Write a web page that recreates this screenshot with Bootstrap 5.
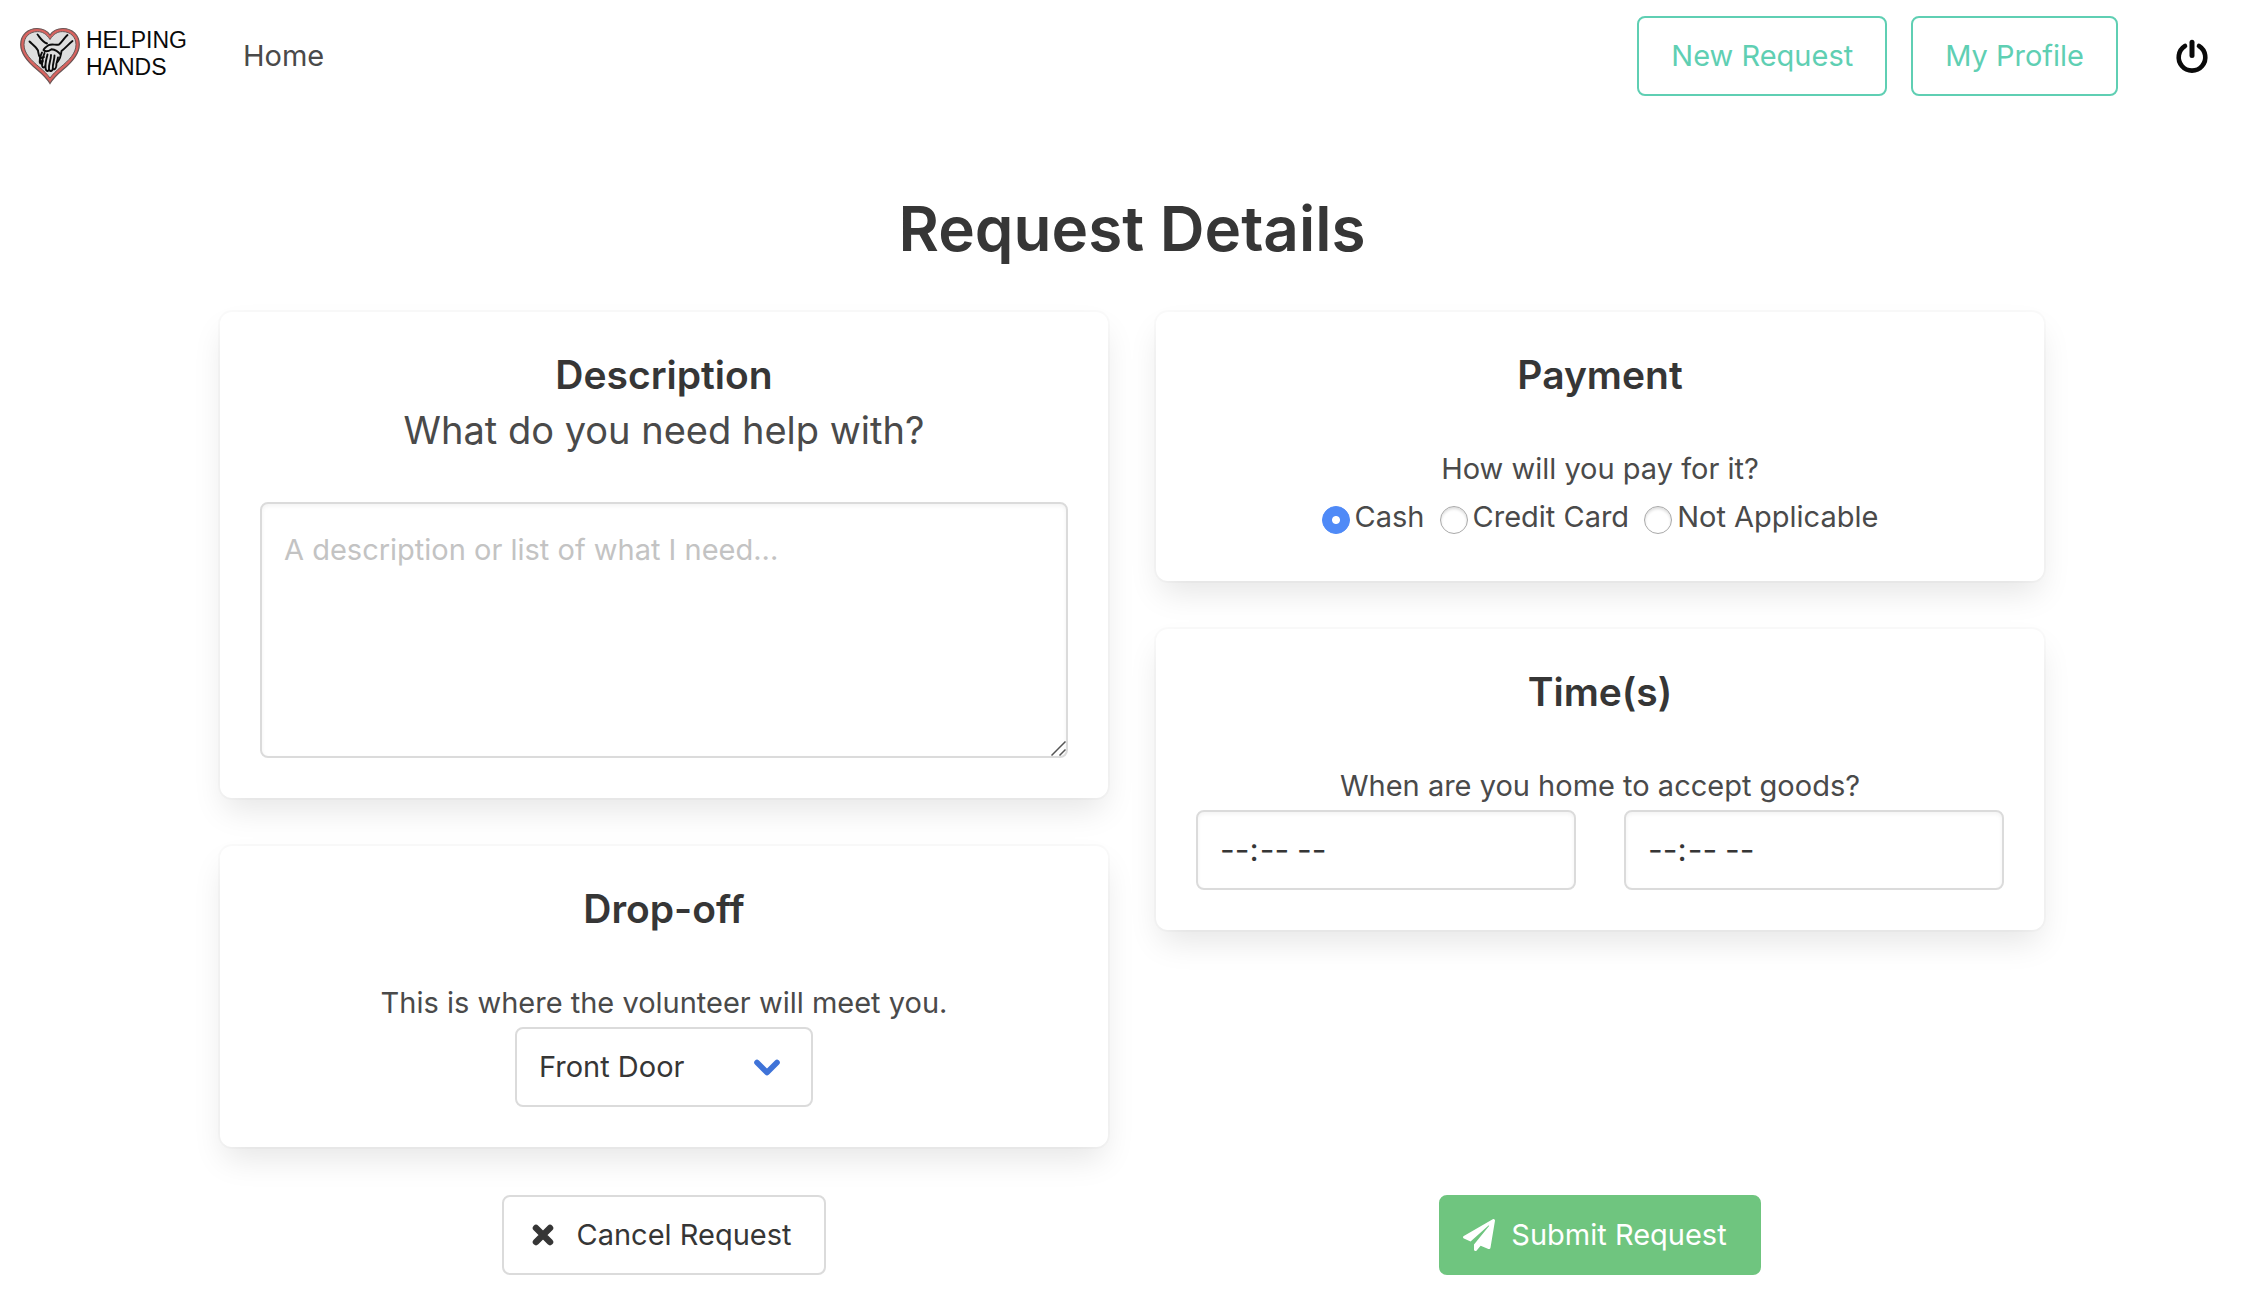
<!DOCTYPE html>
<html lang="en">
<head>
<meta charset="utf-8">
<meta name="viewport" content="width=device-width, initial-scale=1">
<title>Helping Hands - Request Details</title>
<link href="https://cdn.jsdelivr.net/npm/bootstrap@5.3.0/dist/css/bootstrap.min.css" rel="stylesheet">
<style>
  body { font-family: Inter, "Liberation Sans", sans-serif; font-size: 29px; line-height: 48px; color: #4a4a4a; background: #fff; }
  .site-nav { padding: 16px 50px 16px 20px; --bs-navbar-nav-link-padding-x: 0; }
  .brand-link { gap: 6px; }
  .brand-words { font-family: "Liberation Sans", sans-serif; font-size: 23px; line-height: 27px; color: #0a0a0a; padding-top: 1px; }
  .home-link { color: #4a4a4a; margin-left: 56px; }
  .nav-actions { gap: 24px; }
  .power-link { color: #0a0a0a; margin-left: 32px; }
  .btn { --bs-btn-font-size: 29px; --bs-btn-line-height: 48px; --bs-btn-border-width: 2px; --bs-btn-border-radius: 8px; --bs-btn-padding-y: 14px; --bs-btn-padding-x: 32px; }
  .btn-teal { --bs-btn-color: #5fcfb3; --bs-btn-border-color: #5fcfb3; --bs-btn-hover-color: #fff; --bs-btn-hover-bg: #5fcfb3; --bs-btn-hover-border-color: #5fcfb3; }
  .btn-plain { --bs-btn-color: #363636; --bs-btn-bg: #fff; --bs-btn-border-color: #dbdbdb; --bs-btn-hover-border-color: #b5b5b5; }
  .btn-send { --bs-btn-color: #fff; --bs-btn-bg: #6fc57f; --bs-btn-border-color: #6fc57f; --bs-btn-hover-color: #fff; --bs-btn-hover-bg: #62ba73; --bs-btn-hover-border-color: #62ba73; }
  .btn-icon { --bs-btn-padding-x: 22px; padding-right: 32px; gap: 16px; }
  .page-body { max-width: 1876px; padding: 80px 24px 36px 28px; }
  .page-title { font-size: 62px; line-height: 74px; font-weight: 600; color: #363636; margin-bottom: 46px; }
  .row { --bs-gutter-x: 48px; }
  .stack { gap: 48px; }
  .card { --bs-card-border-width: 0; --bs-card-border-radius: 12px; --bs-card-spacer-x: 40px; --bs-card-spacer-y: 40px; --bs-card-color: #4a4a4a; box-shadow: 0 16px 32px -4px rgba(10,10,10,.1), 0 0 0 2px rgba(10,10,10,.02); }
  .box-title { font-size: 39px; line-height: 45px; font-weight: 600; color: #363636; margin-bottom: 48px; }
  .box-title.tight { margin-bottom: 8px; }
  .box-subtitle { font-size: 38px; line-height: 50px; margin-bottom: 47px; }
  .form-control, .form-select { font-size: 29px; line-height: 48px; color: #363636; border: 2px solid #dbdbdb; border-radius: 8px; padding: 14px 22px; }
  .form-control { box-shadow: inset 0 2px 4px rgba(10,10,10,.05); }
  textarea.form-control { padding-top: 22px; height: 256px; }
  .form-control::placeholder { color: #c3c3c3; }
  textarea::-webkit-resizer { background: url("data:image/svg+xml,%3Csvg xmlns='http://www.w3.org/2000/svg' viewBox='0 0 16 16'%3E%3Cpath d='M1 15 15 1M9 15l6-6' stroke='%23555' stroke-width='1.5'/%3E%3C/svg%3E") center / 16px no-repeat; }
  .form-select { width: 298px; background: #fff url("data:image/svg+xml,%3Csvg xmlns='http://www.w3.org/2000/svg' viewBox='0 0 26 17'%3E%3Cpath d='M3 3.500 13 13.500 23 3.500' fill='none' stroke='%233f73d8' stroke-width='5.600' stroke-linecap='round' stroke-linejoin='round'/%3E%3C/svg%3E") right 31px center / 26px 17px no-repeat; }
  .time-row { gap: 48px; }
  input[type=time] { font-size: 32px; height: 80px; padding-top: 0; padding-bottom: 0; }
  input[type=time]::-webkit-calendar-picker-indicator { display: none; }
  .pay-row { gap: 15px; }
  .form-check-input { width: 28px; height: 28px; margin: 6px 5px 0 0; border: 1px solid #aaa; box-shadow: inset 0 2px 3px rgba(0,0,0,.14); flex: none; }
  .form-check-input:checked { background-color: #4f8af7; border-color: #4f8af7; box-shadow: none; }
  .form-check-input:checked[type=radio] { --bs-form-check-bg-image: none; background-image: radial-gradient(circle, #fff 3.5px, transparent 4.5px); }
  .action-row { margin-top: 48px; }
</style>
<script src="https://cdn.jsdelivr.net/npm/bootstrap@5.3.0/dist/js/bootstrap.bundle.min.js"></script>
</head>
<body>
<nav class="navbar navbar-expand site-nav">
  <a class="d-flex text-decoration-none brand-link" href="#" aria-label="Helping Hands">
    <svg width="60" height="60" viewBox="0 0 60 60" fill="none" aria-hidden="true">
      <path d="M30 9C27 4.500 22 2.500 17 2.500C8 2.500.700 9 .700 18.500C.700 29 9 37 17 43.500C23 48.500 27 52.500 30 57.500C33 52.500 37 48.500 43 43.500C51 37 59.300 29 59.300 18.500C59.300 9 52 2.500 43 2.500C38 2.500 33 4.500 30 9Z" fill="#d9635f" stroke="#6a5555" stroke-width="1.200"/>
      <path d="M30 13.500C26.500 8 22.500 5.600 17.500 5.600C9.500 5.600 4 11 4 18.700C4 27.500 11.500 34.500 19 40.800C24 45 27.500 48.500 30 52C32.500 48.500 36 45 41 40.800C48.500 34.500 56 27.500 56 18.700C56 11 50.500 5.600 42.500 5.600C37.500 5.600 33.500 8 30 13.500Z" fill="#dedede" stroke="#6a5555" stroke-width="1"/>
      <g stroke="#0c0c0c" stroke-width="1.900" stroke-linecap="round" stroke-linejoin="round">
        <path d="M17.500 8.500C20 11.500 22 15.500 27 17.500M47.500 9C44 12 42 16 39 18.500C35 19.300 32 17.500 28.500 19.200C26.500 20.500 24 22.500 23.500 24C25.500 26 29 25 31.500 23.200C35 23.500 38 25 40.500 28.500M52.500 15C48.500 18 46 21.500 41.500 25C41 30 40 33 37.500 36M9.500 15.500C12 18 16 20.500 18 24.500C18.500 28 18.500 30 20.500 32"/>
        <path d="M22 26.500C20.500 29 19.500 33 19.700 36C20.200 38.500 22.500 37.500 22.500 36M24.500 27C23 31 21.500 36 22.200 40C23 42.500 25.200 41.500 25.200 39.500M27.500 28.500C26.500 33 24.500 38 25.800 43.500C27 46 29.300 45 29 42.500M31 29C31 34 28.500 38 29 43C30 46.500 32.500 45 32.800 42.500M34.500 29.500C34.500 34 32.500 38 32.800 42.500C34 44.500 36 42.500 36.300 40M38 31.500C37.500 35 36 37 36.300 40M20.500 32L24 31M20 35.500L23 35"/>
      </g>
    </svg>
    <span class="brand-words">HELPING<br>HANDS</span>
  </a>
  <div class="navbar-nav flex-grow-1">
    <a class="nav-link p-0 home-link" href="#">Home</a>
  </div>
  <div class="d-flex align-items-center nav-actions">
    <a class="btn btn-teal" href="#">New Request</a>
    <a class="btn btn-teal" href="#">My Profile</a>
    <a class="power-link d-flex" href="#" aria-label="Log out">
      <svg width="36" height="34" viewBox="0 0 36 34" fill="none" stroke="currentColor" stroke-linecap="round" aria-hidden="true">
        <path d="M11 7A13.300 13.300 0 1 0 25 7" stroke-width="4.600"/><path d="M18 3.200V16.500" stroke-width="5"/>
      </svg>
    </a>
  </div>
</nav>

<main class="container-fluid page-body">
  <h1 class="page-title text-center">Request Details</h1>
  <form>
    <div class="row">
      <div class="col-6 d-flex flex-column stack">
        <section class="card"><div class="card-body text-center">
          <h2 class="box-title tight">Description</h2>
          <label class="box-subtitle d-block" for="what">What do you need help with?</label>
          <textarea class="form-control d-block" id="what" placeholder="A description or list of what I need..."></textarea>
        </div></section>
        <section class="card"><div class="card-body text-center">
          <h2 class="box-title">Drop-off</h2>
          <label class="d-block" for="place">This is where the volunteer will meet you.</label>
          <select class="form-select mx-auto" id="place"><option>Front Door</option><option>Back Door</option></select>
        </div></section>
      </div>
      <div class="col-6 d-flex flex-column stack">
        <section class="card"><div class="card-body text-center">
          <h2 class="box-title">Payment</h2>
          <div id="pay-label">How will you pay for it?</div>
          <div class="d-flex justify-content-center pay-row" role="radiogroup" aria-labelledby="pay-label">
            <label class="d-flex align-items-center"><input class="form-check-input" type="radio" name="pay" checked>Cash</label>
            <label class="d-flex align-items-center"><input class="form-check-input" type="radio" name="pay">Credit Card</label>
            <label class="d-flex align-items-center"><input class="form-check-input" type="radio" name="pay">Not Applicable</label>
          </div>
        </div></section>
        <section class="card"><div class="card-body text-center">
          <h2 class="box-title">Time(s)</h2>
          <div id="time-label">When are you home to accept goods?</div>
          <div class="d-flex time-row">
            <input class="form-control" type="time" aria-labelledby="time-label">
            <input class="form-control" type="time" aria-labelledby="time-label">
          </div>
        </div></section>
      </div>
    </div>
    <div class="row action-row">
      <div class="col-6 d-flex justify-content-center">
        <button class="btn btn-plain btn-icon d-inline-flex align-items-center" type="button">
          <svg width="34" height="32" viewBox="0 0 34 32" aria-hidden="true"><path d="M10 9 24 23M24 9 10 23" stroke="currentColor" stroke-width="6.500" stroke-linecap="round"/></svg>
          Cancel Request
        </button>
      </div>
      <div class="col-6 d-flex justify-content-center">
        <button class="btn btn-send btn-icon d-inline-flex align-items-center" type="submit">
          <svg width="32" height="32" viewBox="0 0 512 512" fill="currentColor" aria-hidden="true"><path d="M476 3.200 12.500 270.600c-18.100 10.400-15.800 35.600 2.200 43.200L121 358.400l287.300-253.200c5.500-4.900 13.300 2.600 8.600 8.300L176 407v80.500c0 23.600 28.500 32.900 42.500 15.800L282 426l124.600 52.200c14.200 6 30.400-2.900 33-18.200l72-432C515 7.800 493.300-6.800 476 3.200z"/></svg>
          Submit Request
        </button>
      </div>
    </div>
  </form>
</main>
</body>
</html>
